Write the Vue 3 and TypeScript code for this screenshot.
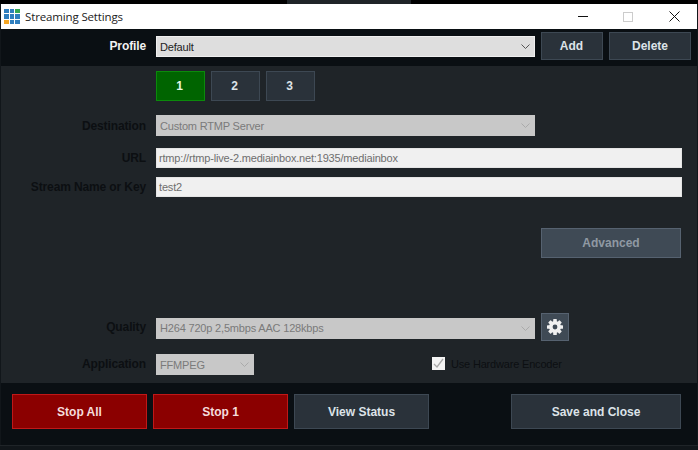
<script setup lang="ts">
const tabs = [
  { label: '1', active: true },
  { label: '2', active: false },
  { label: '3', active: false },
]
const logo = ['#2f7fbf', '#2f7fbf', '#35a853', '#2f7fbf', '#2f7fbf', '#2f7fbf', '#f5a623', '#2f7fbf', '#2f7fbf']
const gearTeeth = [0, 45, 90, 135]
</script>

<template>
  <div class="screen">
    <div class="desktop-top"><span class="desktop-patch"></span></div>
    <div class="window">
      <header class="titlebar">
        <div class="logo">
          <span v-for="(c, i) in logo" :key="i" :style="{ background: c }"></span>
        </div>
        <span class="title">Streaming Settings</span>
        <div class="controls">
          <svg class="ctl-min" width="10" height="10" viewBox="0 0 10 10"><path d="M0 5.500H10" stroke="#111" fill="none" /></svg>
          <svg class="ctl-max" width="10" height="10" viewBox="0 0 10 10"><rect x=".5" y=".5" width="9" height="9" stroke="#ccc" fill="none" /></svg>
          <svg width="11" height="11" viewBox="0 0 11 11"><path d="M.5.5l10 10M10.500.5l-10 10" stroke="#111" fill="none" /></svg>
        </div>
      </header>

      <section class="profile-bar">
        <label class="label bright">Profile</label>
        <div class="select light wide">
          <span>Default</span>
          <svg class="chev" width="9" height="5" viewBox="0 0 9 5"><path d="M.5.5l4 4 4-4" stroke="#555" fill="none" /></svg>
        </div>
        <button class="btn add">Add</button>
        <button class="btn del">Delete</button>
      </section>

      <main class="body">
        <div class="tabs">
          <button v-for="t in tabs" :key="t.label" class="btn tab" :class="{ active: t.active }">{{ t.label }}</button>
        </div>

        <div class="row dest">
          <label class="label">Destination</label>
          <div class="select wide">
            <span>Custom RTMP Server</span>
            <svg class="chev" width="9" height="5" viewBox="0 0 9 5"><path d="M.5.5l4 4 4-4" stroke="#aaa" fill="none" /></svg>
          </div>
        </div>
        <div class="row url">
          <label class="label">URL</label>
          <div class="input">rtmp://rtmp-live-2.mediainbox.net:1935/mediainbox</div>
        </div>
        <div class="row key">
          <label class="label">Stream Name or Key</label>
          <div class="input">test2</div>
        </div>

        <div class="advanced-row">
          <button class="btn advanced">Advanced</button>
        </div>

        <div class="row quality">
          <label class="label">Quality</label>
          <div class="select wide">
            <span>H264 720p 2,5mbps AAC 128kbps</span>
            <svg class="chev" width="9" height="5" viewBox="0 0 9 5"><path d="M.5.5l4 4 4-4" stroke="#aaa" fill="none" /></svg>
          </div>
          <button class="btn gear" aria-label="Settings">
            <svg width="16" height="16" viewBox="0 0 16 16">
              <rect v-for="a in gearTeeth" :key="a" x="6.200" y="0" width="3.600" height="16" rx=".6" fill="#f0f0f0" :transform="`rotate(${a} 8 8)`" />
              <circle cx="8" cy="8" r="6" fill="#f0f0f0" />
              <circle cx="8" cy="8" r="2.400" fill="#3f4a55" />
            </svg>
          </button>
        </div>

        <div class="row app">
          <label class="label">Application</label>
          <div class="select narrow">
            <span>FFMPEG</span>
            <svg class="chev" width="9" height="5" viewBox="0 0 9 5"><path d="M.5.5l4 4 4-4" stroke="#aaa" fill="none" /></svg>
          </div>
          <div class="check">
            <span class="box">
              <svg width="11" height="11" viewBox="0 0 11 11"><path d="M1 6l3 3 6-8" stroke="#aaa" stroke-width="1.300" fill="none" /></svg>
            </span>
            <span>Use Hardware Encoder</span>
          </div>
        </div>
      </main>

      <footer class="footer">
        <button class="btn foot stop">Stop All</button>
        <button class="btn foot stop">Stop 1</button>
        <button class="btn foot">View Status</button>
        <button class="btn save">Save and Close</button>
      </footer>
    </div>
    <div class="bottom"></div>
  </div>
</template>

<style>
html, body { margin: 0; background: #11161a; }
</style>

<style scoped>
.screen {
  width: 698px;
  height: 450px;
  overflow: hidden;
  background: #11161a;
  font-family: "Liberation Sans", Arial, sans-serif;
  display: flex;
  flex-direction: column;
}
.desktop-top {
  height: 4px;
  background: #000;
  flex: none;
  padding-left: 287px;
}
.desktop-patch { display: block; width: 124px; height: 4px; background: #1f2428; }
.window {
  flex: 1;
  display: flex;
  flex-direction: column;
  margin-left: 1px;
  margin-right: 1px;
  min-height: 0;
}
.titlebar {
  height: 25px;
  background: #fff;
  display: flex;
  align-items: center;
  flex: none;
}
.logo {
  margin-left: 3px;
  width: 16px;
  height: 16px;
  display: grid;
  grid-template-columns: repeat(3, 1fr);
  grid-template-rows: repeat(3, 1fr);
  gap: 1px;
}
.title {
  margin-left: 5px;
  font: 11.500px "Open Sans", sans-serif;
  letter-spacing: -0.14px;
  color: #222;
}
.controls {
  margin-left: auto;
  display: flex;
  align-items: center;
  padding-right: 17px;
}
.ctl-min { margin-right: 35px; margin-top: -1px; }
.ctl-max { margin-right: 36px; }
.profile-bar {
  height: 37px;
  background: #0a0f13;
  flex: none;
  display: flex;
  align-items: flex-start;
  box-sizing: border-box;
  padding-top: 3px;
}
.label {
  width: 145px;
  flex: none;
  text-align: right;
  font-weight: 700;
  font-size: 12px;
  letter-spacing: -0.12px;
  color: #0c0f12;
  margin-right: 10px;
}
.label.bright { color: #f2f2f2; line-height: 21px; margin-top: 4px; }
.select {
  height: 21px;
  box-sizing: border-box;
  background: #c8c8c8;
  color: #7a7a7a;
  font-size: 11px;
  letter-spacing: -0.18px;
  display: flex;
  align-items: center;
  justify-content: space-between;
  padding: 0 5px 0 4px;
  flex: none;
}
.select.wide { width: 379px; }
.select.narrow { width: 98px; }
.select.light {
  background: #dedede;
  color: #222;
  border: 1px solid #efefef;
  margin-top: 4px;
  padding-left: 3px;
  padding-right: 4px;
}
.btn {
  box-sizing: border-box;
  border: 1px solid #3d4853;
  background: #2a323a;
  color: #dde3e8;
  font: 700 12px "Liberation Sans", Arial, sans-serif;
  padding: 0;
  display: flex;
  align-items: center;
  justify-content: center;
}
.add { width: 62px; height: 28px; margin-left: 6px; padding-right: 1px; }
.del { width: 82px; height: 28px; margin-left: 6px; }
.body {
  flex: 1;
  min-height: 0;
  display: flex;
  flex-direction: column;
  background: #1f2428;
  padding-top: 5px;
  box-sizing: border-box;
}
.tabs { display: flex; gap: 6px; padding-left: 155px; }
.tab { width: 49px; height: 30px; padding-right: 2px; }
.tab.active { background: #006400; border-color: #0b8a0b; color: #e6f7e6; }
.row { display: flex; align-items: center; }
.dest { margin-top: 14px; height: 21px; }
.url { margin-top: 12px; height: 20px; }
.key { margin-top: 9px; height: 20px; }
.input {
  width: 526px;
  height: 20px;
  box-sizing: border-box;
  background: #f0f0f0;
  color: #6e6e6e;
  font-size: 11px;
  letter-spacing: -0.18px;
  line-height: 19px;
  padding-left: 2px;
  border: 1px solid #e4e4e4;
}
.advanced-row { margin-top: 31px; padding-left: 540px; }
.advanced {
  width: 140px;
  height: 30px;
  background: #3f4a55;
  border-color: #566270;
  color: #8f99a3;
}
.quality { margin-top: 55px; height: 28px; }
.quality .select { margin-top: 2px; }
.gear { width: 28px; height: 28px; margin-left: 6px; background: #3f4a55; border-color: #566270; }
.app { margin-top: 13px; height: 21px; }
.app .label { margin-top: -2px; }
.check {
  margin-left: 178px;
  margin-top: -2px;
  display: flex;
  align-items: center;
  gap: 6px;
  font-size: 11px;
  letter-spacing: -0.18px;
  color: #0c0f12;
}
.box {
  width: 13px;
  height: 13px;
  background: #f4f4f4;
  display: flex;
  align-items: center;
  justify-content: center;
}
.footer {
  height: 62px;
  background: #0a0f13;
  flex: none;
  display: flex;
  align-items: flex-start;
  padding: 11px 0 0 11px;
  box-sizing: border-box;
  gap: 6px;
}
.foot { width: 135px; height: 35px; }
.stop { background: #8b0000; border-color: #c01818; color: #f5dcdc; }
.save { width: 170px; height: 35px; margin-left: 76px; }
.bottom { height: 5px; flex: none; box-sizing: border-box; background: #11161a; border-top: 1px solid #1f2428; }
</style>
